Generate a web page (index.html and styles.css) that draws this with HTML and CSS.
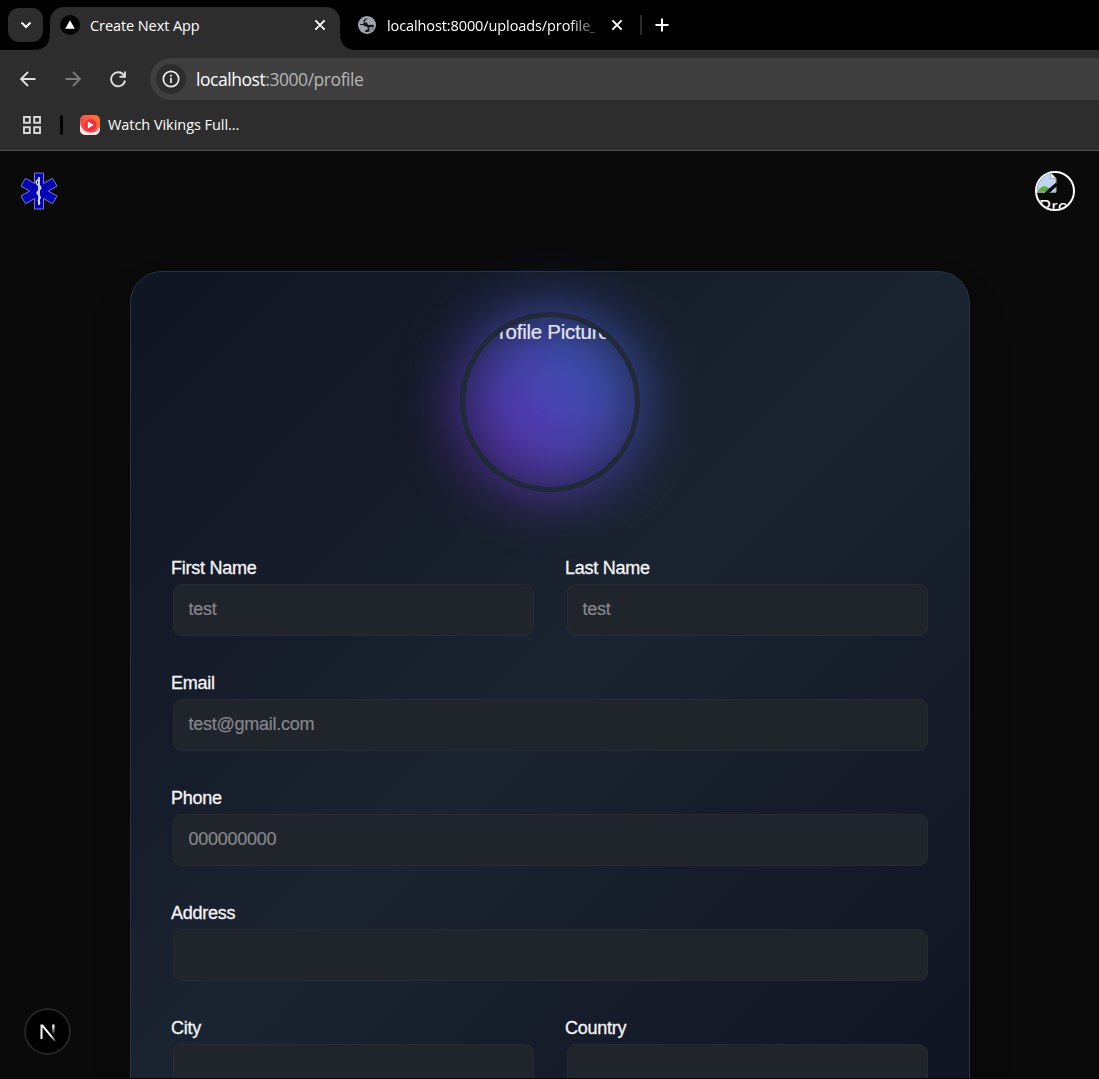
FILE: index.html
```html
<!DOCTYPE html>
<html lang="en">
<head>
<meta charset="utf-8">
<title>Create Next App</title>
<link rel="stylesheet" href="styles.css">
</head>
<body>
<div class="window">
  <header class="chrome">
    <div class="tabs">
      <button class="tab-search" aria-label="Search tabs"><svg width="12" height="8" viewBox="0 0 12 8"><path d="M1.500 1.500 6 6l4.500-4.500" fill="none" stroke="#fff" stroke-width="2"/></svg></button>
      <div class="tab tab-active">
        <svg class="favicon" width="20" height="20" viewBox="0 0 20 20"><circle cx="10" cy="10" r="10" fill="#000"/><path d="M10 5.200 14.800 13.800H5.200Z" fill="#fff"/></svg>
        <span class="tab-title title-app">Create Next App</span>
        <svg class="close" width="12" height="12" viewBox="0 0 12 12"><path d="M1.400 1.400l9.200 9.200M10.600 1.400l-9.200 9.200" stroke="#fff" stroke-width="1.900"/></svg>
      </div>
      <div class="tab tab-idle">
        <svg class="globe" width="18" height="18" viewBox="0 0 18 18"><circle cx="9" cy="9" r="9" fill="#9fa4ab"/><path d="M10.500 2.200C8.500 2.500 8.200 3.200 8.300 4.200 7 4.300 6.300 5 6.500 6.200c1.500.2 2.600.2 3 1.500.3 1.300 1.300 1.300 2.700 1.100 1.300-.3 2.500.1 3.700.3.100 3.500-2.800 6.900-6.700 7l-2-.2c-.3-1 .1-1.700 1.100-1.800 1.200-.2 1.600-.8 1.400-2-.2-1.300-1.300-1.700-2.600-1.800-1-.9-2.300-1.200-5-1.200l.1-1.400c2 .6 3.300.6 3.600-.6C6 5.500 4.500 5 6 3.800 7.200 2.700 8.500 2 10.500 2.200Z" fill="#161719"/><path d="M10.800 3c1.800.3 3.500 1.500 4.200 3-1.500.9-2.800.5-4 .2-1-.3-1.300-1-.9-1.700.3-.5.900-.7.700-1.500Z" fill="#9fa4ab"/><path d="M11 11.500c1.300-.5 2.500-.7 4-.5-.5 2-2 3.700-4 4.300.6-1.500.7-2.300 0-3.800Z" fill="#9fa4ab"/></svg>
        <span class="tab-title title-upload">localhost:8000/uploads/profile_</span>
        <svg class="close" width="12" height="12" viewBox="0 0 12 12"><path d="M1.400 1.400l9.200 9.200M10.600 1.400l-9.200 9.200" stroke="#fff" stroke-width="1.900"/></svg>
      </div>
      <span class="tab-divider"></span>
      <svg class="plus" width="14" height="14" viewBox="0 0 14 14"><path d="M7 .5v13M.5 7h13" stroke="#fff" stroke-width="2"/></svg>
    </div>
    <div class="toolbar">
      <svg class="nav" width="18" height="18" viewBox="0 0 18 18"><path d="M16.500 9H2.500M9 2 2 9l7 7" fill="none" stroke="#dedede" stroke-width="1.800"/></svg>
      <svg class="nav" width="18" height="18" viewBox="0 0 18 18"><path d="M1.500 9h14M9 2l7 7-7 7" fill="none" stroke="#7b7b7b" stroke-width="1.800"/></svg>
      <svg class="nav" width="18" height="18" viewBox="0 0 18 18"><path d="M15 5.500A7 7 0 1 0 16 10.500M16 1.500v5.300h-5.500" fill="none" stroke="#dedede" stroke-width="1.900"/></svg>
      <div class="omnibox">
        <span class="site-info"><svg width="18" height="18" viewBox="0 0 18 18"><circle cx="9" cy="9" r="7.700" fill="none" stroke="#eee" stroke-width="1.700"/><path d="M9 8v5M9 4.800v1.900" stroke="#eee" stroke-width="1.700"/></svg></span>
        <span class="url"><span class="host">localhost</span>:3000/profile</span>
      </div>
    </div>
    <div class="bookmarks">
      <svg width="18" height="18" viewBox="0 0 18 18"><path d="M1 1h5.800v5.800H1zM11.200 1H17v5.800h-5.800zM1 11.200h5.800V17H1zM11.200 11.200H17V17h-5.800z" fill="none" stroke="#d8d8d8" stroke-width="1.900"/></svg>
      <span class="bookmark-divider"></span>
      <svg width="20" height="20" viewBox="0 0 20 20"><defs><linearGradient id="play-bg" x1="1" y1="0" x2="0" y2="1"><stop offset="0" stop-color="#ff7a35"/><stop offset="1" stop-color="#ee3348"/></linearGradient></defs><rect width="20" height="20" rx="5" fill="url(#play-bg)"/><path d="M0 6c0 7 5 12 12 11.500 4-.2 6-3 7-6 1 3 1 5-1 7a5 5 0 0 1-3 1.500H5a5 5 0 0 1-5-5Z" fill="#ffe9ea"/><circle cx="10.500" cy="10" r="6" fill="#f32b3d"/><path d="M7.800 6.500 13.800 10l-6 3.500Z" fill="#fff"/></svg>
      <span class="bookmark-title">Watch Vikings Full...</span>
    </div>
  </header>

  <main class="page">
    <nav class="site-nav">
      <svg width="38" height="38" viewBox="0 0 38 38"><path d="M14.500 1h9v10.500l9-5.200 4.500 7.700-8.700 5 8.700 5-4.500 7.700-9-5.200V37h-9V26.500l-9 5.200L1 24l8.700-5L1 14l4.500-7.700 9 5.200Z" fill="#0000b8" stroke="#7777cf" stroke-width="1"/><path d="M19 5v28" stroke="#d8dcf5" stroke-width="1.800"/><path d="M18.500 8c-3 0-3 4-.5 5s4 3 1.500 5-3.500 3-1 5 2 3 .5 4.500 0 3 1 4" fill="none" stroke="#d8dcf5" stroke-width="1.500"/></svg>
      <div class="avatar">
        <svg width="20" height="20" viewBox="0 0 20 20"><path d="M0 0h14l5 5v14.500H0Z" fill="#c0d3f7"/><path d="M0 19.500c3-7 9-9 14-2l1 2Z" fill="#53b335"/><path d="M13.500 0v5.500H19" fill="#f2f2f2" stroke="#a8a8a8"/><path d="M0 19h19V5" fill="none" stroke="#a8a8a8"/><path d="M9 20.500 20 11" stroke="#0a0a0a" stroke-width="3.500"/></svg>
        <span>Profile</span>
      </div>
    </nav>

    <section class="card">
      <div class="portrait-row"><div class="portrait"><span>Profile Picture</span></div></div>
      <form class="fields">
        <div class="field"><label>First Name</label><div class="input">test</div></div>
        <div class="field"><label>Last Name</label><div class="input">test</div></div>
        <div class="field wide"><label>Email</label><div class="input">test@gmail.com</div></div>
        <div class="field wide"><label>Phone</label><div class="input">000000000</div></div>
        <div class="field wide"><label>Address</label><div class="input"></div></div>
        <div class="field"><label>City</label><div class="input"></div></div>
        <div class="field"><label>Country</label><div class="input"></div></div>
      </form>
    </section>
    <div class="dev-badge"><svg width="18" height="20" viewBox="0 0 18 20"><defs><linearGradient id="n-diag" x1="0" y1="0" x2="1" y2="1"><stop offset=".65" stop-color="#fff"/><stop offset="1" stop-color="#fff" stop-opacity=".15"/></linearGradient><linearGradient id="n-stem" x1="0" y1="0" x2="0" y2="1"><stop offset=".2" stop-color="#fff"/><stop offset="1" stop-color="#fff" stop-opacity="0"/></linearGradient></defs><path d="M1.500 17V2.500h2.300L17 18.500l-1.700 1L3.500 5.300V17Z" fill="url(#n-diag)"/><path d="M13.300 2.500h2.200v10h-2.200z" fill="url(#n-stem)"/></svg></div>
  </main>
</div>
</body>
</html>
```
FILE: styles.css
```css
* { box-sizing: border-box; }
body { margin: 0; background: #000; }
svg { display: block; flex: none; }
.window { width: 1099px; height: 1079px; overflow: hidden; border-bottom: 1px solid #000; display: flex; flex-direction: column; font-family: "Liberation Sans", Arial, sans-serif; }

.chrome { flex: none; height: 151px; background: #2d2d2d; border-bottom: 1px solid #555; font-family: "Open Sans", "Noto Sans", sans-serif; color: #fff; }
.tabs { height: 50px; background: #000; display: flex; align-items: center; }
.tab-search { width: 35px; height: 34px; margin: 0 0 0 8px; padding: 0; border: 0; border-radius: 11px; background: #2d2d2d; display: flex; align-items: center; justify-content: center; }
.tab { display: flex; align-items: center; position: relative; }
.tab-active { width: 290px; height: 43px; margin: 7px 0 0 7px; padding: 0 14px 7px 10px; background: #2d2d2d; border-radius: 14px 14px 0 0; }
.tab-active::before, .tab-active::after { content: ""; position: absolute; bottom: 0; width: 14px; height: 14px; }
.tab-active::before { left: -14px; background: radial-gradient(circle at 0 0, transparent 13.5px, #2d2d2d 14px); }
.tab-active::after { right: -14px; background: radial-gradient(circle at 100% 0, transparent 13.5px, #2d2d2d 14px); }
.tab-title { padding-top: 2px; font-size: 14.5px; line-height: 20px; white-space: nowrap; }
.title-app { margin-left: 10px; letter-spacing: -0.08px; }
.tab .close { margin-left: auto; }
.tab-idle { width: 283px; padding-left: 18px; }
.title-upload { width: 208px; margin-left: 11px; letter-spacing: -0.1px; -webkit-mask-image: linear-gradient(90deg, #000 87%, rgba(0, 0, 0, .25)); mask-image: linear-gradient(90deg, #000 87%, rgba(0, 0, 0, .25)); }
.tab-divider { width: 2px; height: 20px; margin-left: 17px; background: #2d2d2d; }
.plus { margin-left: 13px; }

.toolbar { height: 58px; padding-left: 19px; display: flex; align-items: center; gap: 27px; }
.omnibox { flex: 1; height: 42px; margin-left: -4px; padding-left: 6px; border-radius: 21px 0 0 21px; background: #3f3f3f; display: flex; align-items: center; }
.site-info { width: 30px; height: 30px; border-radius: 50%; background: #2d2d2d; display: flex; align-items: center; justify-content: center; }
.url { margin-left: 10px; font-size: 17.5px; letter-spacing: -0.45px; color: #b4b4b4; }
.host { color: #fff; }
.bookmarks { height: 34px; padding-left: 23px; display: flex; align-items: center; }
.bookmark-divider { width: 3px; height: 20px; margin: 0 17px 0 19px; border-radius: 2px; background: #000; }
.bookmark-title { margin-left: 8px; padding-bottom: 2px; font-size: 14.5px; letter-spacing: -0.05px; }

.page { flex: 1; min-height: 0; position: relative; background: #0a0a0a; overflow: hidden; }
.site-nav { height: 80px; padding: 0 24px 0 20px; display: flex; align-items: center; justify-content: space-between; }
.avatar { width: 40px; height: 40px; border: 2px solid #fff; border-radius: 50%; overflow: hidden; color: #fff; font-size: 18px; line-height: 20px; white-space: nowrap; }
.avatar span { display: block; margin: 4px 0 0 2px; letter-spacing: 0.5px; }

.card { width: 840px; height: 860px; margin: 40px auto 0; padding: 40px; border: 1px solid #283444; border-radius: 32px; background: linear-gradient(135deg, #0f1523 0%, #151b28 27%, #1a2430 49%, #151b28 73%, #0f1523 96%); box-shadow: 0 25px 50px -12px rgba(0, 0, 0, .25); color: #f4f4f6; }
.portrait-row { height: 246px; display: flex; justify-content: center; align-items: flex-start; }
.portrait { width: 180px; height: 180px; position: relative; z-index: 0; border-radius: 50%; }
.portrait::before { content: ""; position: absolute; z-index: -1; inset: 0; border-radius: 50%; background: linear-gradient(45deg, #8425e0, #3b82f6); filter: blur(32px); opacity: .7; }
.portrait span { display: block; height: 180px; padding-top: 1px; border: 5px solid #1f2937; border-radius: 50%; overflow: hidden; font-size: 20.5px; line-height: 28px; letter-spacing: -0.25px; text-indent: -4px; text-align: center; white-space: nowrap; -webkit-text-stroke: 0.2px currentColor; color: #e1e4ed; }
.fields { display: grid; grid-template-columns: 1fr 1fr; column-gap: 30px; row-gap: 31px; }
.wide { grid-column: 1 / -1; }
.field { height: 84px; }
.field label { display: block; height: 26px; font-size: 18px; line-height: 21px; letter-spacing: -0.25px; text-indent: 0.4px; -webkit-text-stroke: 0.3px currentColor; }
.input { height: 52px; margin: 0 1px 0 2px; padding: 0 15px; border: 1px solid #272b31; border-radius: 9px; background: #20242b; font-size: 18px; line-height: 49px; letter-spacing: -0.25px; -webkit-text-stroke: 0.2px currentColor; color: #85878c; }

.dev-badge { position: absolute; left: 24px; bottom: 23px; width: 47px; height: 47px; border: 2px solid #242424; border-radius: 50%; background: #000; display: flex; align-items: center; justify-content: center; }
```
